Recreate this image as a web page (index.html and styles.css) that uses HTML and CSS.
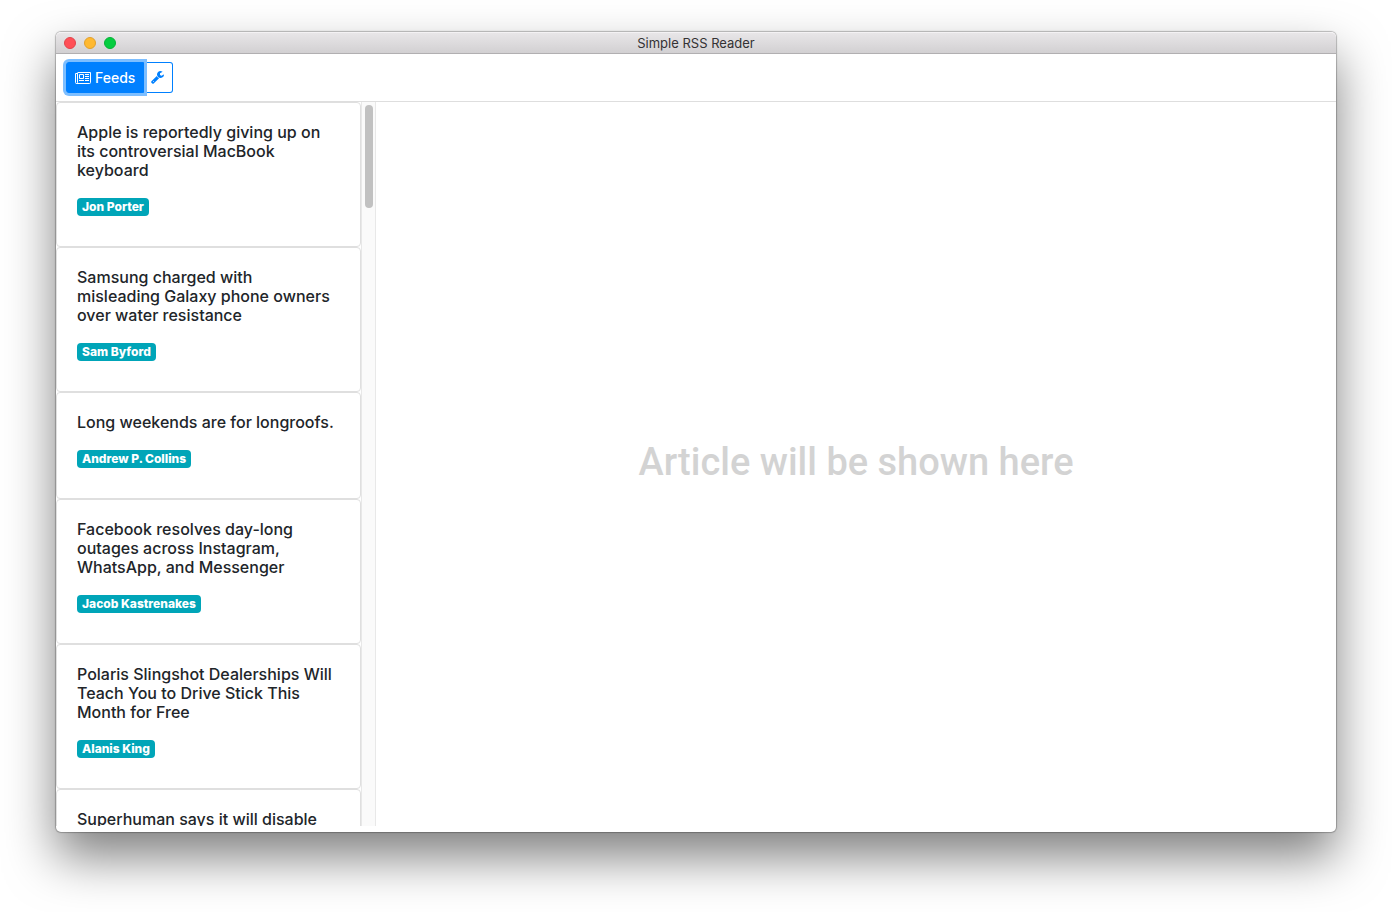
FILE: index.html
```html
<!DOCTYPE html>
<html lang="en">
<head>
<meta charset="utf-8">
<title>Simple RSS Reader</title>
<link rel="stylesheet" href="styles.css">
</head>
<body>
<div class="window">
  <header class="titlebar">
    <div class="lights">
      <span class="light light-close"></span>
      <span class="light light-minimize"></span>
      <span class="light light-zoom"></span>
    </div>
    <span class="window-title">Simple RSS Reader</span>
  </header>
  <nav class="toolbar">
    <div class="button-group">
      <button type="button" class="button button-active">
        <svg class="icon-news" viewBox="0 0 16 12" aria-hidden="true">
          <path d="M2.500 .5h13v10a1 1 0 0 1-1 1h-13a1 1 0 0 1-1-1v-9h2M2.500 1v9.500a1 1 0 0 1-1 1" fill="none" stroke="currentColor"/>
          <path d="M4.500 2.500h4v4h-4zM4 8.500h5M10 2.500h4M10 4.500h4M10 6.500h4M10 8.500h4" fill="none" stroke="currentColor"/>
        </svg>
        Feeds
      </button>
      <button type="button" class="button" aria-label="Settings">
        <svg class="icon-wrench" viewBox="0 0 1664 1664" aria-hidden="true">
          <path fill="currentColor" d="M384 1344q0-26-19-45t-45-19-45 19-19 45 19 45 45 19 45-19 19-45zm644-420l-682 682q-37 37-90 37-52 0-91-37L59 1498q-38-36-38-90 0-53 38-91l681-681q39 98 114.500 173.500T1028 924zm634-435q0 39-23 106-47 134-164.500 217.500T1216 896q-185 0-316.500-131.500T768 448t131.500-316.500T1216 0q58 0 121.500 16.500T1445 63q16 11 16 28t-16 28l-293 169v224l193 107q5-3 79-48.500t135.500-81T1630 454q15 0 23.500 10t8.500 25z"/>
        </svg>
      </button>
    </div>
  </nav>
  <main class="content">
    <aside class="sidebar">
      <div class="feed">
        <article class="card"><h2 class="card-title">Apple is reportedly giving up on its controversial MacBook keyboard</h2><span class="badge">Jon Porter</span></article>
        <article class="card"><h2 class="card-title">Samsung charged with misleading Galaxy phone owners over water resistance</h2><span class="badge">Sam Byford</span></article>
        <article class="card"><h2 class="card-title">Long weekends are for longroofs.</h2><span class="badge">Andrew P. Collins</span></article>
        <article class="card"><h2 class="card-title">Facebook resolves day-long outages across Instagram, WhatsApp, and Messenger</h2><span class="badge">Jacob Kastrenakes</span></article>
        <article class="card"><h2 class="card-title">Polaris Slingshot Dealerships Will Teach You to Drive Stick This Month for Free</h2><span class="badge">Alanis King</span></article>
        <article class="card"><h2 class="card-title">Superhuman says it will disable</h2></article>
      </div>
      <div class="scrollbar"><div class="thumb"></div></div>
    </aside>
    <section class="reader"><p class="placeholder">Article will be shown here</p></section>
  </main>
</div>
</body>
</html>
```
FILE: styles.css
```css
* { box-sizing: border-box; }

body {
  display: flex;
  height: 100vh;
  margin: 0;
  padding: 32px 56px 80px;
  overflow: hidden;
  background: #fff;
  color: #212529;
  font-family: Inter, "Liberation Sans", sans-serif;
}

.window {
  display: flex;
  flex: 1;
  flex-direction: column;
  min-width: 0;
  padding-bottom: 6px;
  border-radius: 5px;
  background: #fff;
  box-shadow: 0 0 1px 1px rgba(0, 0, 0, .25), 0 25px 50px rgba(0, 0, 0, .5);
}

.titlebar {
  display: grid;
  flex: none;
  grid-template-columns: 1fr auto 1fr;
  align-items: center;
  height: 22px;
  padding: 0 8px;
  border-top: 1px solid #f4f2f4;
  border-bottom: 1px solid #b1afb1;
  border-radius: 5px 5px 0 0;
  background: linear-gradient(#e8e6e8, #d2d0d2);
}

.lights { display: flex; gap: 8px; }

.light {
  width: 12px;
  height: 12px;
  border: 1px solid #e2444b;
  border-radius: 50%;
  background: #ff4f57;
}
.light-minimize { border-color: #e2a02c; background: #ffb931; }
.light-zoom { border-color: #05b236; background: #05cd40; }

.window-title { color: #343234; font-size: 13px; line-height: 20px; }

.toolbar {
  flex: none;
  padding: 8px 10px;
  border-bottom: 1px solid #dedede;
}

.button-group { display: flex; height: 31px; }

.button {
  display: flex;
  align-items: center;
  gap: 4px;
  padding: 0 8px 0 7px;
  border: 1px solid #0080ff;
  border-left: 0;
  border-radius: 0 3px 3px 0;
  background: #fff;
  color: #0080ff;
  font: 500 14px/21px Inter, "Liberation Sans", sans-serif;
}

.button-active {
  position: relative;
  z-index: 1;
  padding: 0 8px;
  border-left: 1px solid #0080ff;
  border-radius: 3px 0 0 3px;
  background: #0080ff;
  color: #fff;
  box-shadow: 0 0 0 3px #7dbeff;
}

.icon-news { width: 16px; height: 12px; }
.icon-wrench { width: 13px; height: 13px; }

.content { display: flex; flex: 1; min-height: 0; }

.sidebar { display: flex; flex: none; width: 320px; }

.feed { flex: 1; min-width: 0; overflow: hidden; }

.card {
  padding: 20px 22px 30px 20px;
  border: 1px solid #dfdfdf;
  border-radius: 4px;
}

.card-title {
  margin: 0 0 18px;
  font-size: 16px;
  font-weight: 500;
  line-height: 19px;
}

.badge {
  display: block;
  width: fit-content;
  padding: 0 5px;
  border-radius: 4px;
  background: #00a5b8;
  color: #fff;
  font-size: 12px;
  font-weight: 800;
  line-height: 18px;
}

.scrollbar {
  width: 15px;
  padding: 3px 2px 3px 3px;
  border: solid #e8e8e8;
  border-width: 0 1px;
  background: #fafafa;
}

.thumb { width: 8px; height: 103px; border-radius: 4px; background: #c1c1c1; }

.reader {
  display: flex;
  flex: 1;
  align-items: center;
  justify-content: center;
  min-width: 0;
  padding-bottom: 4px;
}

.placeholder {
  margin: 0;
  color: #d3d3d3;
  font-family: Roboto, "Liberation Sans", sans-serif;
  font-size: 38px;
  font-weight: 500;
  line-height: 48px;
}
```
